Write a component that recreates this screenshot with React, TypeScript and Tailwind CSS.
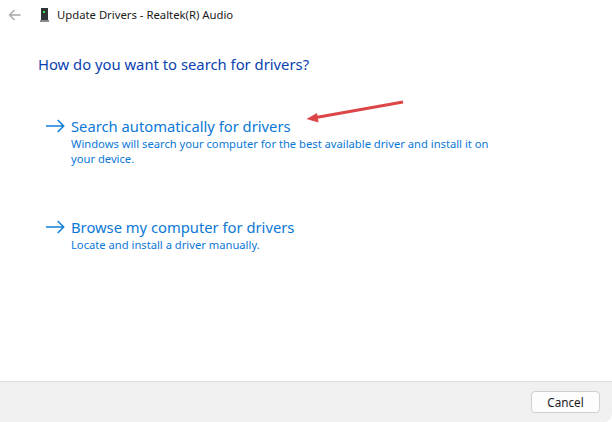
const FONT = "font-['Noto_Sans','Open_Sans',sans-serif]";

function ArrowIcon() {
  return (
    <svg width="19" height="14" viewBox="0 0 19 14" fill="none" className="shrink-0">
      <path d="M0 7H17.5M11.7 1L17.7 7L11.7 13" stroke="#0f7fd8" strokeWidth="1.5" />
    </svg>
  );
}

function Option({ title, children }: { title: string; children: React.ReactNode }) {
  return (
    <div className="flex pl-[46px]">
      <div className="w-[25px] pt-[3px]">
        <ArrowIcon />
      </div>
      <div className="w-[430px]">
        <div className="text-[14.75px] leading-[20px] text-[#0a78d7]">{title}</div>
        <div className="text-[11.2px] leading-[15px] text-[#0a78d7]">{children}</div>
      </div>
    </div>
  );
}

export default function App() {
  return (
    <div className={`${FONT} relative w-[612px] h-[422px] bg-white flex flex-col overflow-hidden`}>
      <div className="flex items-center h-[30px] pl-[8px]">
        <svg width="13" height="12" viewBox="0 0 13 12" fill="none">
          <path d="M12.5 6H1.5M6.5 1L1.5 6L6.5 11" stroke="#a8a8a8" strokeWidth="1.3" />
        </svg>
        <svg width="9" height="14" viewBox="0 0 9 14" className="ml-[19px]">
          <rect x="1" y="0" width="7" height="12" fill="#2f3437" />
          <rect x="3" y="3" width="2" height="2" fill="#3ee05a" />
          <rect x="0" y="12" width="9" height="2" fill="#8a8a8a" />
        </svg>
        <span className="ml-[8px] text-[11.3px] text-[#1a1a1a]">Update Drivers - Realtek(R) Audio</span>
      </div>

      <h1 className="pl-[38px] mt-[23px] text-[14.8px] leading-[22px] text-[#0a3fb0]">
        How do you want to search for drivers?
      </h1>

      <div className="mt-[41px]">
        <Option title="Search automatically for drivers">
          Windows will search your computer for the best available driver and install it on your device.
        </Option>
      </div>
      <div className="mt-[51px]">
        <Option title="Browse my computer for drivers">Locate and install a driver manually.</Option>
      </div>

      <div className="mt-auto h-[41px] bg-[#f0f0f0] border-t border-[#dfdfdf] flex items-start justify-end pt-[9px] pr-[12px] rounded-br-[8px]">
        <button className="w-[69px] h-[22px] bg-[#fdfdfd] border border-[#d0d0d0] rounded-[4px] text-[11.7px] leading-[18px] text-[#1a1a1a]">
          Cancel
        </button>
      </div>

      {/* red annotation arrow over the dialog */}
      <svg width="612" height="422" className="absolute left-0 top-0 pointer-events-none" fill="none">
        <path d="M403 102L316 117.5" stroke="#dc4648" strokeWidth="2.8" />
        <path d="M306.5 119L317 113L318.5 122.5Z" fill="#dc4648" />
      </svg>
    </div>
  );
}
